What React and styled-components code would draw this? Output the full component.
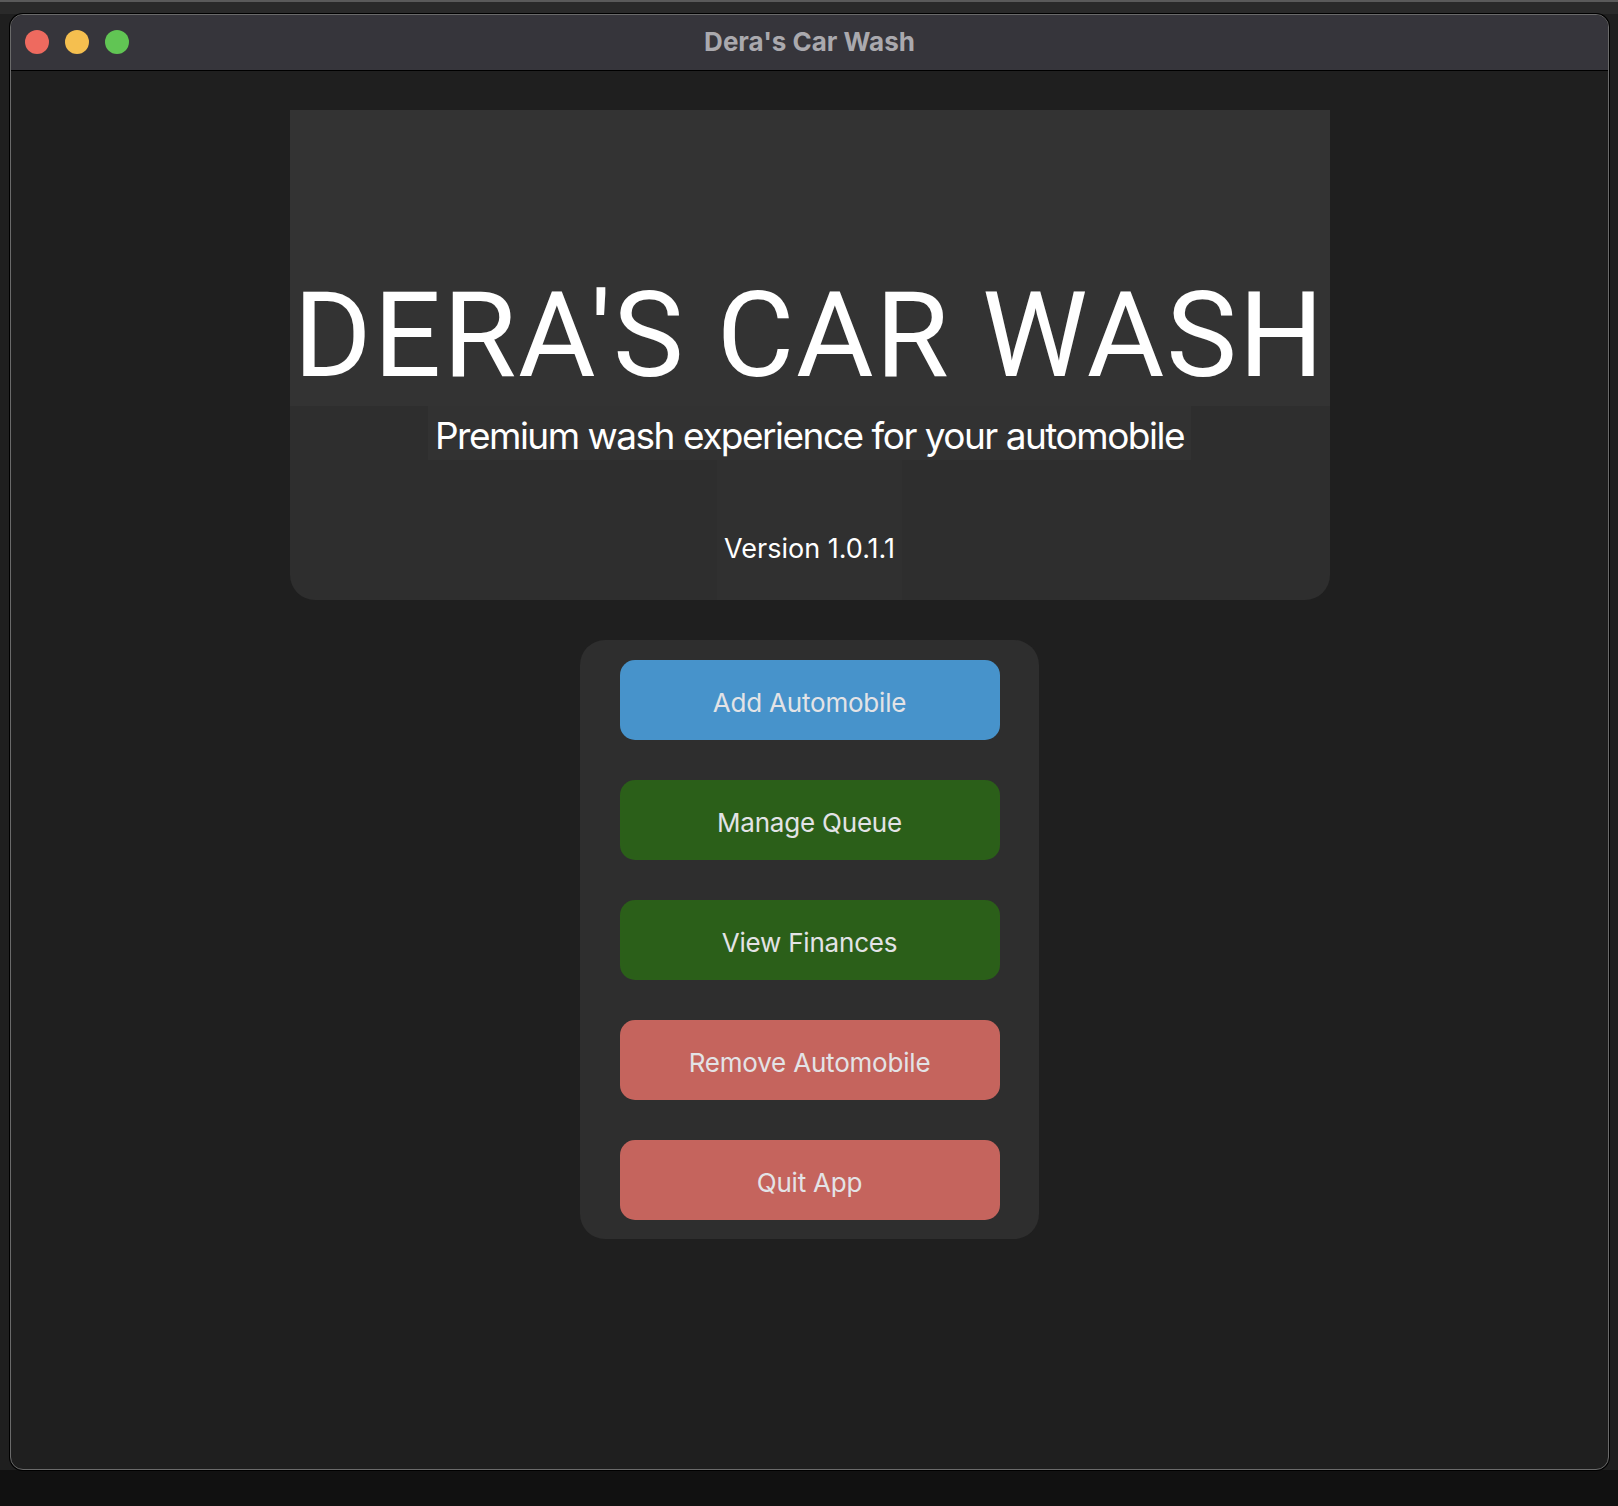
import React from "react"
import styled, { createGlobalStyle } from "styled-components"

const GlobalStyle = createGlobalStyle`
  html, body {
    margin: 0;
    padding: 0;
    background: #111111;
  }
  * {
    box-sizing: border-box;
  }
`

const Desktop = styled.div`
  width: 1618px;
  height: 1506px;
  padding: 14px 9px 0 10px;
  background: linear-gradient(
    to bottom,
    #5a5a5a 0,
    #5a5a5a 2px,
    #2a2a2a 2px,
    #2a2a2a 14px,
    #1f1f1f 14px,
    #1f1f1f 1470px,
    #111111 1470px
  );
  overflow: hidden;
`

const Window = styled.div`
  width: 1599px;
  height: 1456px;
  display: flex;
  flex-direction: column;
  background: #1f1f1f;
  border: 1px solid #6a6a6a;
  border-radius: 13px;
  box-shadow: 0 0 0 1px #000000;
  overflow: hidden;
`

const TitleBar = styled.div`
  position: relative;
  height: 56px;
  flex-shrink: 0;
  display: flex;
  align-items: center;
  justify-content: center;
  background: #36353b;
  border-bottom: 1px solid #000000;
`

const Lights = styled.div`
  position: absolute;
  left: 14px;
  top: 15px;
  display: flex;
  gap: 16px;
`

const Light = styled.span`
  width: 24px;
  height: 24px;
  border-radius: 50%;
  background: ${(p) => p.color};
`

const WindowTitle = styled.div`
  font-family: Inter, "Noto Sans", sans-serif;
  font-weight: 700;
  font-size: 26px;
  color: #aaa9ae;
  padding-bottom: 3px;
`

const Content = styled.div`
  flex: 1;
  display: flex;
  flex-direction: column;
  align-items: center;
  padding-top: 39px;
  gap: 40px;
`

const HeaderCard = styled.div`
  width: 1040px;
  display: flex;
  flex-direction: column;
  align-items: center;
  background: #2e2e2e;
  border-radius: 0 0 25px 25px;
  overflow: hidden;
`

const BigTitle = styled.div`
  width: 100%;
  height: 296px;
  display: flex;
  align-items: flex-end;
  justify-content: center;
  padding-bottom: 11px;
  background: #333333;
  font-family: Roboto, "Liberation Sans", sans-serif;
  font-size: 119px;
  line-height: 119px;
  letter-spacing: 1.8px;
  color: #ffffff;
  white-space: nowrap;
`

const Subtitle = styled.div`
  height: 54px;
  padding: 5px 7px 0;
  background: #323232;
  font-family: Inter, "Noto Sans", sans-serif;
  font-size: 37px;
  line-height: 49px;
  letter-spacing: -1.5px;
  color: #ffffff;
  white-space: nowrap;
`

const Version = styled.div`
  height: 140px;
  padding: 75px 7px 0;
  background: #303030;
  font-family: Inter, "Noto Sans", sans-serif;
  font-size: 27px;
  line-height: 27px;
  color: #ffffff;
  white-space: nowrap;
`

const ButtonPanel = styled.div`
  width: 459px;
  display: flex;
  flex-direction: column;
  align-items: center;
  gap: 40px;
  padding: 20px 0 19px;
  background: #2e2e2e;
  border-radius: 25px;
`

const ActionButton = styled.button`
  width: 380px;
  height: 80px;
  border: none;
  border-radius: 15px;
  padding: 4px 0 0;
  background: ${(p) => p.bg};
  color: #e3e3e6;
  font-family: Inter, "Noto Sans", sans-serif;
  font-size: 26px;
  letter-spacing: -0.2px;
  cursor: pointer;
`

const buttons = [
  { label: "Add Automobile", bg: "#4793cb" },
  { label: "Manage Queue", bg: "#2b5f19" },
  { label: "View Finances", bg: "#2b5f19" },
  { label: "Remove Automobile", bg: "#c5645d" },
  { label: "Quit App", bg: "#c5645d" },
]

export default function App() {
  return (
    <Desktop>
      <GlobalStyle />
      <Window>
        <TitleBar>
          <Lights>
            <Light color="#ee6a5f" />
            <Light color="#f5bf4f" />
            <Light color="#61c554" />
          </Lights>
          <WindowTitle>Dera's Car Wash</WindowTitle>
        </TitleBar>
        <Content>
          <HeaderCard>
            <BigTitle>DERA'S CAR WASH</BigTitle>
            <Subtitle>Premium wash experience for your automobile</Subtitle>
            <Version>Version 1.0.1.1</Version>
          </HeaderCard>
          <ButtonPanel>
            {buttons.map((b) => (
              <ActionButton key={b.label} bg={b.bg}>
                {b.label}
              </ActionButton>
            ))}
          </ButtonPanel>
        </Content>
      </Window>
    </Desktop>
  )
}
